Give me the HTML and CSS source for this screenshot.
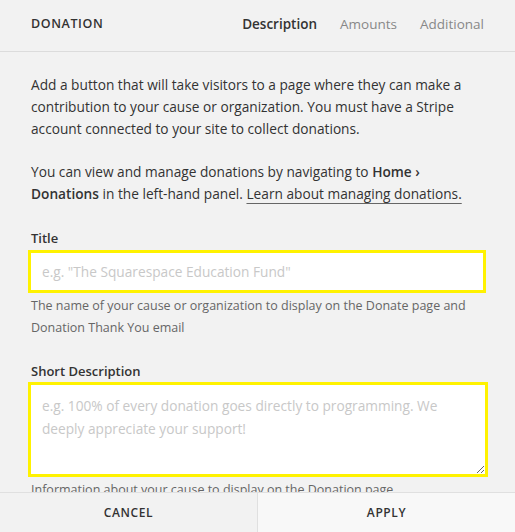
FILE: index.html
```html
<!DOCTYPE html>
<html>
<head>
<meta charset="utf-8">
<link rel="stylesheet" href="styles.css">
</head>
<body>
<div class="panel">
  <header class="header">
    <div class="title">DONATION</div>
    <nav class="tabs">
      <span class="tab active">Description</span>
      <span class="tab">Amounts</span>
      <span class="tab">Additional</span>
    </nav>
  </header>
  <main class="content">
    <p class="intro">Add a button that will take visitors to a page where they can make a contribution to your cause or organization. You must have a Stripe account connected to your site to collect donations.</p>
    <p class="intro">You can view and manage donations by navigating to <b>Home ›<br>Donations</b> in the left-hand panel. <a class="link">Learn about managing donations.</a></p>
    <div class="field">
      <label class="label">Title</label>
      <input class="input" type="text" placeholder="e.g. &quot;The Squarespace Education Fund&quot;">
      <div class="help">The name of your cause or organization to display on the Donate page and Donation Thank You email</div>
    </div>
    <div class="field">
      <label class="label label-tight">Short Description</label>
      <textarea class="textarea" placeholder="e.g. 100% of every donation goes directly to programming. We deeply appreciate your support!"></textarea>
      <div class="help help-low">Information about your cause to display on the Donation page</div>
    </div>
  </main>
  <footer class="footer">
    <button class="btn cancel">CANCEL</button>
    <button class="btn apply">APPLY</button>
  </footer>
</div>
</body>
</html>
```

FILE: styles.css
```css
* { box-sizing: border-box; }
html, body { margin: 0; padding: 0; }
body {
  font-family: "Open Sans", "Liberation Sans", sans-serif;
  color: #333;
  background: #f2f2f2;
}
.panel {
  width: 515px;
  height: 532px;
  display: flex;
  flex-direction: column;
  overflow: hidden;
}
.header {
  height: 52px;
  flex: none;
  display: flex;
  align-items: center;
  justify-content: space-between;
  padding: 0 31px 4px 31px;
  border-bottom: 1px solid #dcdcdc;
}
.title {
  font-size: 12.5px;
  font-weight: 600;
  letter-spacing: 0.6px;
  color: #333;
}
.tabs { display: flex; gap: 23px; }
.tab { font-size: 13.5px; color: #888; }
.tab.active { color: #333; font-weight: 600; }
.content {
  flex: 1;
  overflow: hidden;
  padding: 22px 26px 0 31px;
}
.intro {
  margin: 0 0 21px;
  font-size: 13.7px;
  line-height: 22px;
  color: #333;
}
.intro b { font-weight: 600; }
.link {
  color: #333;
  text-decoration: underline;
  text-underline-offset: 4px;
  text-decoration-color: #666;
}
.field { margin-bottom: 20px; padding-top: 4px; }
.label {
  display: block;
  font-size: 13px;
  line-height: 16px;
  font-weight: 600;
  color: #333;
  margin-bottom: 4px;
}
.label-tight { margin-bottom: 3px; }
.input, .textarea {
  display: block;
  margin-left: -3px;
  border: 3px solid #fff200;
  background: #fff;
  font-family: inherit;
  font-size: 13.7px;
  color: #333;
  outline: none;
  border-radius: 0;
}
.input {
  width: 458px;
  height: 43px;
  padding: 0 11px;
}
.textarea {
  width: 460px;
  height: 95px;
  padding: 9px 11px;
  line-height: 23px;
  resize: vertical;
}
.input::placeholder, .textarea::placeholder { color: #c8c8c8; }
.help {
  margin-top: 2px;
  font-size: 12.5px;
  line-height: 22px;
  color: #666;
}
.help-low { margin-top: 2px; }
.footer {
  height: 40px;
  flex: none;
  display: flex;
  border-top: 1px solid #e0e0e0;
}
.btn {
  flex: 1;
  border: 0;
  margin: 0;
  font-family: inherit;
  font-size: 12px;
  font-weight: 600;
  letter-spacing: 0.6px;
  color: #333;
  cursor: pointer;
}
.cancel { background: #f2f2f2; border-right: 1px solid #e0e0e0; }
.apply { background: #f8f8f8; }
```
